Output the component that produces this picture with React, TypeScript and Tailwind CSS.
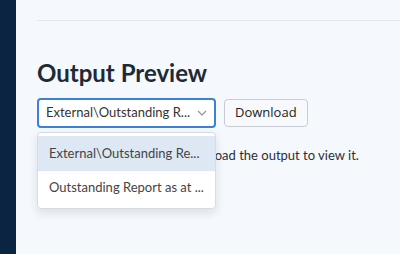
export default function App() {
  return (
    <div className="flex h-[254px] w-[400px] overflow-hidden bg-[#f5f8fc] font-['Lato',sans-serif]">
      <aside className="w-4 shrink-0 bg-[#0b2442]" />

      <main className="flex-1 pl-[21px]">
        <div className="mt-5 h-px bg-[#e3e7ee]" />

        <h2 className="mt-[38px] text-[24px] font-bold leading-[28px] text-[#1f2937]">Output Preview</h2>

        <div className="relative mt-[11px]">
          <div className="flex items-center gap-2">
            <div className="flex h-[30px] w-[179px] items-center justify-between rounded-[4px] border-2 border-[#3b82d6] bg-white pl-[7px] pr-[6px]">
              <span className="whitespace-nowrap text-[13px] text-[#333]">External\Outstanding R...</span>
              <svg width="10" height="6" viewBox="0 0 10 6" fill="none" className="mr-[1px]">
                <path d="M1 1l4 4 4-4" stroke="#8a94a6" strokeWidth="1.2" />
              </svg>
            </div>
            <button className="h-[28px] rounded-[4px] border border-[#c8ccd2] bg-[#f7f9fc] px-[10px] font-['Open_Sans',sans-serif] text-[13px] text-[#222]">
              Download
            </button>
          </div>

          <p className="mt-[18px] whitespace-nowrap text-[13px] text-[#2b2f36]">
            Pick an item above, then download the output to view it.
          </p>

          <div className="absolute left-0 top-[34px] w-[179px] rounded-[4px] border border-[#d6dbe4] bg-white py-[3px] shadow-[0_4px_10px_rgba(30,50,90,0.12)]">
            <div className="flex h-[35px] items-center whitespace-nowrap bg-[#dde8f4] pl-[11px] text-[13px] text-[#444]">
              External\Outstanding Re...
            </div>
            <div className="flex h-[34px] items-center whitespace-nowrap pl-[11px] text-[13px] text-[#444]">
              Outstanding Report as at ...
            </div>
          </div>
        </div>
      </main>
    </div>
  )
}
